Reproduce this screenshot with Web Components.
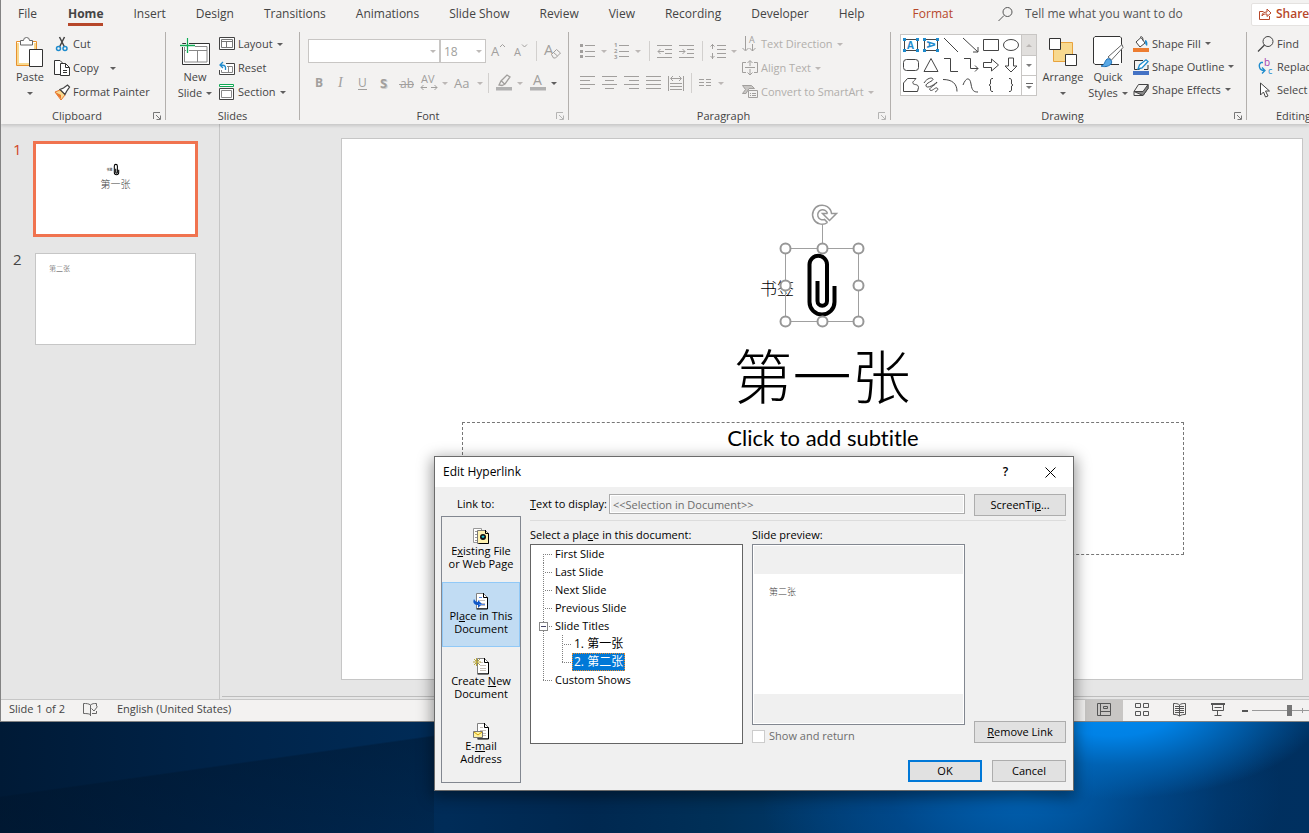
<!DOCTYPE html>
<html lang="en">
<head>
<meta charset="utf-8">
<title>Presentation editor</title>
<style>
html,body{height:100%}
body{margin:0;overflow:hidden;font:11px/16px "Open Sans","Noto Sans CJK SC",sans-serif;color:#444;
 background:
 radial-gradient(ellipse 210px 90px at 85% calc(100% - 124px),#0088ee 0,#0082e6 30%,#0068bccc 62%,#00458800 100%),
 radial-gradient(ellipse 260px 150px at 78% calc(100% - 40px),#0060b0 0,#00509a88 50%,#00305800 100%),
 linear-gradient(172deg,#00142a00 43%,#00142a66 44%,#00142a33 100%) left bottom/434px 111px no-repeat,
 linear-gradient(90deg,#001a36 0,#00244a 18%,#002c58 34%,#002850 45%,#003058 55%,#00407a 70%,#004888 78%,#003a70 86%,#002f5e 93%,#003060 100%);}
</style>
</head>
<body>
<desktop-scene></desktop-scene>
<script>
const define = (tag, html, setup) => {
  const tpl = document.createElement('template');
  customElements.define(tag, class extends HTMLElement {
    constructor() { super(); this.attachShadow({mode: 'open'}); }
    connectedCallback() {
      if (this.shadowRoot.childNodes.length) return;
      tpl.innerHTML = typeof html === 'function' ? html(this) : html;
      this.shadowRoot.append(tpl.content.cloneNode(true));
      if (setup) setup(this, this.shadowRoot);
    }
  });
};

const G = '#a19f9d', K = '#444', B = '#1e8bcd';
const lines = (list, c = G) => `<path d="${list.map(([x, y, w]) => `M${x} ${y}.5h${w}`).join('')}" stroke="${c}" fill="none"/>`;
const doc = (x, y) => `<path d="M${x + .5} ${y + .5}h7l4 4v11h-11z" fill="#fff" stroke="#808080"/><path d="M${x + 7.5} ${y}v4.500h4v11.500h-11" fill="none" stroke="#000"/><path d="M${x + 3} ${y + 4.500}h3M${x + 3} ${y + 7.500}h6M${x + 3} ${y + 10.500}h6M${x + 3} ${y + 12.500}h6" stroke="#c8c0b8"/>`;
const icons = {
  paste: [28, 31, `<path d="M.5 4.500h20v24H.5z" fill="#fff" stroke="#e8912d"/><path d="M2 6v21h17V6" fill="none" stroke="#f8d98f" stroke-width="2"/><path d="M4.500 8V3.500h3a3 3 0 0 1 6 0h3V8z" fill="#fff" stroke="#666"/><path d="M13.500 12.500h13v17h-13z" fill="#fff" stroke="#333"/>`],
  cut: [16, 16, `<path d="M5.500 1l5 10M10.500 1l-5 10" stroke="#444" stroke-width="1.500"/><circle cx="4.500" cy="12.500" r="2" fill="none" stroke="${B}" stroke-width="1.500"/><circle cx="11" cy="12.500" r="2" fill="none" stroke="${B}" stroke-width="1.500"/>`],
  copy: [16, 16, `<path d="M6 14.500H.500V.500H6l2.500 2.500" fill="#fff" stroke="#333"/><path d="M6.500 3.500h5l4 4v8h-9z" fill="#fff" stroke="#333"/><path d="M11.500 3.500v4h4M9 10.500h4M9 12.500h4" fill="none" stroke="#333"/>`],
  painter: [16, 16, `<path d="M1 8l5-2 5 5-4 5z" fill="#f8d98f" stroke="#e8752d"/><path d="M1 8l6 3 0 4z" fill="#e8752d"/><path d="M6 5.500l5 5 1.500-3L15.500 3 13.500 1 9.500 4z" fill="#fff" stroke="#444" stroke-width="1.300"/>`],
  newslide: [30, 28, `<path d="M2.500 5.500h27v21h-27z" fill="#fff" stroke="#333"/><path d="M4.500 8.500h22.500v15.500h-22.500zM4.500 12.500h22.500M17.500 12.500v11.500" fill="none" stroke="#888"/><path d="M7.500 0v15M0 7.500h15" stroke="#fff" stroke-width="3"/><path d="M7.500 0v15M0 7.500h15" stroke="#10a854" stroke-width="1.300"/>`],
  layout: [16, 14, `<path d="M.5.5h15v12H.500z" fill="#fff" stroke="#444"/><path d="M2.500 2.500h11v8h-11zM2.500 4.500h11M7.500 4.500v6" fill="none" stroke="#777"/>`],
  reset: [16, 15, `<path d="M7 2.500h8.500v11H.500V9" fill="#fff" stroke="#444"/><path d="M8 5.500h5.500v6h-11V9M9.500 5v6" fill="none" stroke="#888"/><path d="M6.500 9V6.500c0-2-2-2.500-5-2.500M4 1L1 4l3 3" fill="none" stroke="${B}" stroke-width="1.300"/>`],
  section: [16, 16, `<path d="M.5.5h14v2H.500z" fill="#fff" stroke="#10a854"/><path d="M.5 4.500h14v11H.500z" fill="#fff" stroke="#444"/><path d="M2.500 6.500h10v7h-10z" fill="none" stroke="#888"/>`],
  grow: [16, 16, `<text x="1" y="13" font-size="13" fill="${G}">A</text><path d="M10 4l2.500-2.500L15 4" fill="none" stroke="${G}"/>`],
  shrink: [16, 16, `<text x="1" y="13" font-size="11" fill="${G}">A</text><path d="M9 1.500L11.500 4 14 1.500" fill="none" stroke="${G}"/>`],
  clear: [18, 18, `<text x="1" y="13" font-size="15" fill="${G}">A</text><path d="M8.500 12.500l5-5 4 3.500-5 5h-2z" fill="#f3f2f1" stroke="${G}"/><path d="M10.500 10.500l4 3.500" stroke="${G}"/>`],
  bold: [16, 16, `<text x="4" y="12" font-size="12" font-weight="700" fill="${G}">B</text>`],
  italic: [16, 16, `<text x="5" y="12" font-size="14" font-style="italic" font-family="Liberation Serif" fill="${G}">I</text>`],
  underline: [16, 16, `<text x="3" y="12" font-size="12" fill="${G}">U</text><path d="M3 14.500h9" stroke="${G}"/>`],
  shadow: [16, 16, `<text x="4" y="14" font-size="13" font-weight="700" fill="#d0cecc">S</text><text x="3" y="13" font-size="13" font-weight="700" fill="${G}">S</text>`],
  strike: [16, 16, `<text x="1" y="13" font-size="12" fill="${G}">ab</text><path d="M0 9.500h15" stroke="${G}"/>`],
  spacing: [16, 18, `<text x="0" y="9" font-size="11" fill="${G}">AV</text><path d="M0 13.500h6M10 13.500h6M2.500 11L0 13.500 2.500 16M13.500 11l2.500 2.500-2.500 2.500" fill="none" stroke="${G}"/>`],
  acase: [18, 16, `<text x="0" y="13" font-size="13" fill="${G}">Aa</text>`],
  highlight: [16, 18, `<path d="M0 13h16v3.500H0z" fill="#b1b1b1"/><path d="M3 11l2-4 6-6 3 2-5 7-3 1.500zM5.500 7l3 3" fill="none" stroke="${G}" stroke-width="1.300"/>`],
  fontcolor: [16, 18, `<path d="M0 13h16v3.500H0z" fill="#b1b1b1"/><text x="3" y="11" font-size="14" fill="${G}">A</text>`],
  bullets: [16, 16, lines([[5, 2, 10], [5, 8, 10], [5, 13, 10]]) + `<path d="M0 1h3v3H0zM0 7h3v3H0zM0 12h3v3H0z" fill="${G}"/>`],
  numbers: [16, 18, lines([[5, 3, 10], [5, 9, 10], [5, 14, 10]]) + `<g font-size="6" font-weight="700" fill="${G}"><text x="0" y="5">1</text><text x="0" y="11">2</text><text x="0" y="17">3</text></g>`],
  outdent: [16, 16, lines([[0, 2, 15], [8, 6, 7], [8, 10, 7], [0, 14, 15]]) + `<path d="M1 8.500h6M3.500 6L1 8.500 3.500 11" fill="none" stroke="${G}"/>`],
  indent: [16, 16, lines([[0, 2, 15], [8, 6, 7], [8, 10, 7], [0, 14, 15]]) + `<path d="M0 8.500h6M3.500 6L6 8.500 3.500 11" fill="none" stroke="${G}"/>`],
  lineh: [16, 16, lines([[7, 2, 9], [7, 6, 9], [7, 10, 9], [7, 14, 9]]) + `<path d="M2.500 1v5M2.500 10v6M.5 3.500l2-2 2 2M.5 13l2 2 2-2" fill="none" stroke="${G}"/>`],
  left: [16, 16, lines([[0, 1, 15], [0, 5, 10], [0, 9, 15], [0, 13, 10]])],
  center: [16, 16, lines([[0, 1, 15], [3, 5, 9], [0, 9, 15], [3, 13, 9]])],
  right: [16, 16, lines([[0, 1, 15], [5, 5, 10], [0, 9, 15], [5, 13, 10]])],
  justify: [16, 16, lines([[0, 1, 15], [0, 5, 15], [0, 9, 15], [0, 13, 15]])],
  distribute: [16, 16, lines([[2, 8, 12], [2, 11, 12], [2, 14, 12]]) + `<path d="M.5 1v15M15.500 1v15M3 3.500h10M5 1L2.500 3.500 5 6M11 1l2.500 2.500L11 6" fill="none" stroke="${G}"/>`],
  columns: [14, 12, lines([[0, 2, 5], [7, 2, 5], [0, 5, 5], [7, 5, 5], [0, 8, 5], [7, 8, 5]])],
  direction: [16, 18, `<path d="M3.500 1v14M.5 13l3 3 3-3M10.500 9v7M7.500 13l3 3 3-3" fill="none" stroke="${G}"/><text x="7" y="8" font-size="9" fill="${G}">A</text>`],
  aligntext: [16, 16, `<path d="M4 2.500H.500v10H4M12 2.500h3.500v10H12M8 1v5M8 9v6M5.500 3L8 .500 10.500 3M5.500 12.500L8 15l2.500-2.500M3 7.500h10" fill="none" stroke="${G}"/>`],
  smartart: [16, 16, `<path d="M.5 1.500h9l3 3H7l-3 5H.500l3-4z" fill="#c8c6c4" stroke="${G}"/><path d="M6.500 6.500h9v7h-9z" fill="#f3f2f1" stroke="${G}"/><path d="M8 9.500h1M10 9.500h4M8 11.500h1M10 11.500h4" stroke="${G}"/>`],
  arrange: [28, 28, `<path d="M4.500 4.500h19v19h-19z" fill="#f8d98f" stroke="#e8a33d"/><path d="M.5.500h11v11H.500zM16.500 16.500h11v11h-11z" fill="#fff" stroke="#333"/>`],
  styles: [31, 32, `<path d="M26 28.500H2L.500 27V2L2 .500h25L28.500 2v25" fill="#fff" stroke="#333"/><path d="M15 21L29 8.500l1 3L18.500 24z" fill="#fff" stroke="#666"/><path d="M8 30c4-1 3-4 6-7 3-1 6 2 4 5-3 3-7 3-10 2z" fill="#5aa9e6" stroke="#1b6eb5"/>`],
  fill: [16, 16, `<path d="M0 12h16v4H0z" fill="#ed7d31"/><path d="M3 6l5-4.500 4 5.500-5 4zM7 1.500c2-2 3 0 3 3" fill="#fff" stroke="#444"/><path d="M12 4c2 0 3 3 2 6-2-1-2-3-2-6z" fill="${B}"/>`],
  outline: [16, 16, `<path d="M0 12h16v4H0z" fill="#4472c4"/><path d="M10 1.500H1.500v9h5M15 6v4.500h-4" fill="none" stroke="#333"/><path d="M5 10l1.500-4L13 .800 15 2.500 9 9z" fill="#fff" stroke="${B}" stroke-width="1.300"/>`],
  effects: [16, 14, `<path d="M1 8.500L5.500 1.500h9.500v4l-5 7H1z" fill="#f3f2f1" stroke="#444"/><path d="M1 8.500h9l5-7v4l-5 7z" fill="#888" stroke="#444"/>`],
  find: [16, 16, `<circle cx="10" cy="5.500" r="5" fill="none" stroke="#444"/><path d="M6.500 9L0 15.500" stroke="#444" stroke-width="1.300"/>`],
  replace: [16, 17, `<text x="6" y="8" font-size="10" fill="#a33fb0">b</text><text x="10" y="16" font-size="9" fill="${B}">c</text><path d="M5 4.500H3c-3 2-2 8 3 8M4 9.500l3 3-3 3" fill="none" stroke="${B}" stroke-width="1.300"/>`],
  select: [16, 16, `<path d="M2.500 1v12l3-3 2 5 2.500-1-2.500-5h4z" fill="#fff" stroke="#444"/>`],
  search: [16, 16, `<circle cx="9.500" cy="6" r="4.500" fill="none" stroke="#555"/><path d="M6 9.500L.500 15" stroke="#555"/>`],
  share: [12, 12, `<path d="M4.500 3.500H.500v8h10V8" fill="none" stroke="#b7472a"/><path d="M3 8c0-3 2-4 5-4V1l4 4-4 3.500V6C6 6 4 6 3 8z" fill="none" stroke="#b7472a"/>`],
  launcher: [8, 8, `<path d="M.5 7V.500H7M3 3l4 4M7.500 3.500v4h-4" fill="none" stroke="#777"/>`],
  spell: [16, 14, `<path d="M7.500 12.500c-2-1-5-1-7-1v-10c3 0 5 0 7 1.500v11zM7.500 3c2-1.500 3-1.500 6-1.500v3M13.500 9v2.500H9M8.500 6.500l2.500 2.500 3.500-4.500" fill="none" stroke="#666"/>`],
  normal: [14, 14, `<path d="M.5.500h13v12H.500zM3.500.500v12M3.500 8.500h10M6.500 3.500h4v2h-4z" fill="none" stroke="#555"/>`],
  sorter: [14, 14, `<path d="M.5.500h5v4h-5zM8.500.500h5v4h-5zM.5 8.500h5v4h-5zM8.500 8.500h5v4h-5z" fill="none" stroke="#555"/>`],
  reading: [14, 14, `<path d="M6.500 13V2C5 .500 3 .500.500.500v11c2 0 4 0 6 1.500 2-1.500 4-1.500 6-1.500V.500c-2.500 0-4.500 0-6 1.500M2 3.500h9M2 5.500h9M2 7.500h9M2 9.500h9" fill="none" stroke="#555"/>`],
  show: [14, 14, `<path d="M0 1h14" stroke="#555" stroke-width="2"/><path d="M1.500 2v5.500h11V2M3.500 4.500h7M6.500 7v5M3.500 12.500h7" fill="none" stroke="#555"/>`],
  file: [16, 16, `<path d="M.5.500h8v14h-8z" fill="#fff" stroke="#999"/><path d="M2 3.500h3M2 6.500h3M2 9.500h3M2 12.500h3" stroke="#999"/><path d="M4.500 2.500h8l3 3v10h-11z" fill="#fff2b0" stroke="#777"/><path d="M12.500 2v3.500h3v10h-10" fill="none" stroke="#000"/><circle cx="10" cy="9" r="3" fill="#111"/><path d="M8.500 9a1.500 1.500 0 0 1 3 0l-1.500 1z" fill="#20c8d8"/>`],
  place: [16, 16, doc(3, 0) + `<path d="M1 6c-2 4 1 6 4 6v3l4-4-4-4v2c-2 0-3-1-4-3z" fill="#1058c8"/><path d="M6 4.500h3M6 11.500h6" stroke="#5588e8"/>`],
  create: [16, 16, doc(4, 0) + `<path d="M3.500 0v8M0 4h8M1 1l6 6M7 1L1 7" stroke="#b8a840"/>`],
  mail: [16, 16, doc(4, 0) + `<path d="M.5 8.500h9v6h-9z" fill="#fff2a0" stroke="#777"/><path d="M1 9l4 3 4-3" fill="none" stroke="#d0a000"/>`],
  // shape gallery
  textbox: [18, 16, `<path d="M2.500 2.500h13v11h-13z" fill="#fff" stroke="#444"/><path d="M1 1h3v3H1zM14 1h3v3h-3zM1 12h3v3H1zM14 12h3v3h-3z" fill="${B}"/><text x="5" y="12" font-size="10" font-weight="700" fill="${B}">A</text>`],
  vtextbox: [18, 16, `<path d="M2.500 2.500h13v11h-13z" fill="#fff" stroke="#444"/><path d="M1 1h3v3H1zM14 1h3v3h-3zM1 12h3v3H1zM14 12h3v3h-3z" fill="${B}"/><text x="5" y="12" font-size="10" font-weight="700" fill="${B}" transform="rotate(90 9 8)">A</text>`],
  line: [18, 16, `<path d="M2 1l14 14" stroke="${K}"/>`],
  arrow: [18, 16, `<path d="M1 1l15 14M16 10v5h-5" fill="none" stroke="${K}"/>`],
  rect: [18, 16, `<path d="M1.500 2.500h15v11h-15z" fill="none" stroke="${K}"/>`],
  oval: [18, 16, `<ellipse cx="9" cy="8" rx="7.500" ry="5.500" fill="none" stroke="${K}"/>`],
  rrect: [18, 16, `<rect x="1.500" y="2.500" width="15" height="11" rx="3" fill="none" stroke="${K}"/>`],
  tri: [18, 16, `<path d="M9 1.500l7 13H2z" fill="none" stroke="${K}"/>`],
  elbow: [18, 16, `<path d="M2 1.500h6.500v13H16" fill="none" stroke="${K}"/>`],
  elbowarrow: [18, 16, `<path d="M2 1.500h6.500v10H16M13 8.500l3 3-3 3" fill="none" stroke="${K}"/>`],
  rarrow: [18, 16, `<path d="M1.500 5.500h8v-3.500l7 6-7 6v-3.500h-8z" fill="none" stroke="${K}"/>`],
  darrow: [18, 16, `<path d="M6.500 1v8H3l6 6 6-6h-3.500V1z" fill="none" stroke="${K}"/>`],
  freeform: [18, 16, `<path d="M1.500 14.500V6l4-4.500h8.500c-1 2-4 3-3 5 2 2 5 0 5.500 4l-1 4z" fill="none" stroke="${K}"/>`],
  scribble: [18, 16, `<path d="M2 6c3-5 8-6 9-4s-8 4-7 7 8-1 11-4c-1 3-9 6-7 8s5-3 7-2 0 3-2 4" fill="none" stroke="${K}"/>`],
  arc: [18, 16, `<path d="M1 2.500c9 0 14 4 14 12" fill="none" stroke="${K}"/>`],
  curve: [18, 16, `<path d="M1 8C4 0 8 0 9 7s3 8 7 8" fill="none" stroke="${K}"/>`],
  lbrace: [18, 16, `<path d="M11 1.500H9.500L8.500 3v4L7 8l1.500 1v4l1 1.500H11" fill="none" stroke="${K}"/>`],
  rbrace: [18, 16, `<path d="M7 1.500h1.500l1 1.500v4L11 8 9.500 9v4l-1 1.500H7" fill="none" stroke="${K}"/>`],
};

define('ui-icon', el => {
  const [w, h, body] = icons[el.getAttribute('name')];
  return `<style>:host{display:block;flex:none}svg{display:block;overflow:visible;font-family:"Open Sans",sans-serif}</style>
  <svg width="${w}" height="${h}" viewBox="0 0 ${w} ${h}" aria-hidden="true">${body}</svg>`;
});

define('drop-caret', `<style>:host{display:inline-block;flex:none;width:0;height:0;border:3px solid transparent;border-top-color:currentColor;border-bottom:0;opacity:.85}</style>`);

define('ribbon-command', el => `<style>
:host{display:block;flex:none}
:host([off]){color:#b1aeab}
button{all:unset;display:flex;align-items:center;gap:3px;height:var(--row,24px);padding:0 2px;white-space:nowrap}
.ic{width:16px;display:flex;justify-content:center}
drop-caret{margin-left:1px}
:host([far]) drop-caret{margin-left:8px}
</style><button><span class="ic"><ui-icon name="${el.getAttribute('icon')}"></ui-icon></span><slot></slot>${el.hasAttribute('caret') ? '<drop-caret></drop-caret>' : ''}</button>`);

define('ribbon-large', el => `<style>
:host{display:block;flex:none;width:44px}
button{all:unset;display:flex;flex-direction:column;align-items:center;width:100%;padding-top:3px;white-space:nowrap}
.ic{height:34px;display:flex;align-items:center}
.two{height:16px;display:flex;align-items:center;gap:4px}
</style><button><span class="ic"><ui-icon name="${el.getAttribute('icon')}"></ui-icon></span><span><slot></slot></span><span class="two"><slot name="second"></slot><drop-caret></drop-caret></span></button>`);

define('tool-button', el => `<style>
:host{display:block;flex:none;width:22px;color:#b1aeab}
:host([caret]){width:34px}
:host([caret][tight]){width:33px}
:host([dark]){color:#444}
button{all:unset;display:flex;align-items:center;justify-content:center;height:24px;width:100%}
:host([caret]) button{justify-content:flex-start;gap:5px;padding-left:3px;box-sizing:border-box}
</style><button aria-label="${el.getAttribute('icon')}"><ui-icon name="${el.getAttribute('icon')}"></ui-icon>${el.hasAttribute('caret') ? '<drop-caret></drop-caret>' : ''}</button>`);

define('tool-sep', `<style>:host{display:block;flex:none;width:1px;height:20px;margin:0 4px;background:#d2d0ce}</style>`);

define('ribbon-group', el => `<style>
:host{display:flex;flex-direction:column;flex:none;box-sizing:border-box;height:88px;border-right:1px solid #b3b0ad}
.content{flex:none;height:74px;display:flex;padding-left:var(--pad,7px)}
.foot{flex:none;display:flex;align-items:center;height:20px;margin-bottom:-6px}
.foot span{flex:1;text-align:center}
.foot ui-icon{margin-right:4px}
:host([off]) .foot ui-icon{opacity:.5}
</style><div class="content"><slot></slot></div><div class="foot"><span>${el.getAttribute('label')}</span>${el.hasAttribute('launcher') ? '<ui-icon name="launcher"></ui-icon>' : ''}</div>`);

define('ribbon-tabs', `<style>
:host{display:flex;align-items:center;height:28px;font-size:12px;overflow:hidden}
nav{display:flex;gap:30px;padding-left:17px;flex:none}
a{color:#444;text-decoration:none;line-height:17px;padding-bottom:1px;margin-top:3px;border-bottom:3px solid transparent;white-space:nowrap}
a.on{font-weight:700;border-color:#b7472a;margin-left:1px}
a.ctx{color:#b7472a;margin-left:18px}
.tell{display:flex;align-items:center;gap:11px;margin-left:45px;flex:none}
.tell input{all:unset;width:180px}
.tell input::placeholder{color:#555;opacity:1}
.share{margin-left:auto;flex:none;width:58px;overflow:hidden}
.share button{all:unset;display:flex;align-items:center;gap:5px;width:74px;height:23px;padding-left:7px;background:#fff;border:1px solid #e4e2e0;border-radius:2px;color:#b7472a;font-weight:600;box-sizing:border-box}
</style>
<nav><a href="#file">File</a><a class="on" href="#home">Home</a><a href="#insert">Insert</a><a href="#design">Design</a><a href="#transitions">Transitions</a><a href="#animations">Animations</a><a href="#show">Slide Show</a><a href="#review">Review</a><a href="#view">View</a><a href="#rec">Recording</a><a href="#dev">Developer</a><a href="#help">Help</a><a class="ctx" href="#format">Format</a></nav>
<label class="tell"><ui-icon name="search"></ui-icon><input placeholder="Tell me what you want to do" aria-label="Tell me what you want to do"></label>
<div class="share"><button><ui-icon name="share"></ui-icon>Share</button></div>`);

define('shape-gallery', `<style>
:host{display:flex;flex:none;box-sizing:border-box;width:137px;height:62px;margin:2px 4px 0 0;border:1px solid #c8c6c4;background:#fff}
.grid{display:grid;grid-template-columns:repeat(6,20px);grid-template-rows:repeat(3,20px);place-items:center;flex:1}
.bar{display:grid;grid-template-rows:repeat(3,20px);width:14px;border-left:1px solid #c8c6c4}
.bar button{all:unset;display:flex;flex-direction:column;gap:2px;align-items:center;justify-content:center;color:#666}
.bar button+button{border-top:1px solid #c8c6c4}
.bar .up{background:#e1dfdd;color:#b1aeab}
.up drop-caret{transform:rotate(180deg)}
.more i{width:7px;height:1px;background:#666}
</style><div class="grid">${['textbox', 'vtextbox', 'line', 'arrow', 'rect', 'oval', 'rrect', 'tri', 'elbow', 'elbowarrow', 'rarrow', 'darrow', 'freeform', 'scribble', 'arc', 'curve', 'lbrace', 'rbrace'].map(n => `<ui-icon name="${n}"></ui-icon>`).join('')}</div>
<div class="bar"><button class="up" aria-label="Up"><drop-caret></drop-caret></button><button aria-label="Down"><drop-caret></drop-caret></button><button class="more" aria-label="More"><i></i><drop-caret></drop-caret></button></div>`);

define('combo-box', el => `<style>
:host{display:block;position:relative;flex:none;box-sizing:border-box;height:24px;color:#b1aeab}
select{appearance:none;width:100%;height:100%;border:1px solid #c8c6c4;border-radius:0;background:#fff;color:#a19f9d;font:12px "Open Sans",sans-serif;padding:0 3px;opacity:1}
drop-caret{position:absolute;right:4px;top:11px}
</style><select disabled aria-label="${el.getAttribute('label')}"><option>${el.getAttribute('value')}</option></select><drop-caret></drop-caret>`);

define('office-ribbon', `<style>
:host{display:block;flex:none;background:#f3f2f1;box-shadow:0 2px 3px #0002;position:relative;padding-bottom:4px}
.groups{display:flex;overflow:hidden;padding:4px 0 6px;margin-bottom:-6px}
.col{display:flex;flex-direction:column}
.rows{padding-top:3px}
.row{display:flex;align-items:center;height:32px}
</style>
<ribbon-tabs></ribbon-tabs>
<div class="groups">
<ribbon-group label="Clipboard" launcher style="width:165px">
 <ribbon-large icon="paste">Paste</ribbon-large>
 <div class="col"><ribbon-command icon="cut">Cut</ribbon-command><ribbon-command icon="copy" caret far>Copy</ribbon-command><ribbon-command icon="painter">Format Painter</ribbon-command></div>
</ribbon-group>
<ribbon-group label="Slides" style="width:134px">
 <ribbon-large icon="newslide">New<span slot="second">Slide</span></ribbon-large>
 <div class="col"><ribbon-command icon="layout" caret>Layout</ribbon-command><ribbon-command icon="reset">Reset</ribbon-command><ribbon-command icon="section" caret>Section</ribbon-command></div>
</ribbon-group>
<ribbon-group label="Font" launcher off style="width:269px;--pad:8px">
 <div class="rows">
  <div class="row"><combo-box label="Font" value="" style="width:132px"></combo-box><combo-box label="Font size" value="18" style="width:46px"></combo-box><tool-button icon="grow" style="width:24px"></tool-button><tool-button icon="shrink"></tool-button><tool-sep></tool-sep><tool-button icon="clear"></tool-button></div>
  <div class="row"><tool-button icon="bold"></tool-button><tool-button icon="italic"></tool-button><tool-button icon="underline"></tool-button><tool-button icon="shadow"></tool-button><tool-button icon="strike"></tool-button><tool-button icon="spacing" caret tight></tool-button><tool-button icon="acase" caret tight></tool-button><tool-sep></tool-sep><tool-button icon="highlight" caret></tool-button><tool-button icon="fontcolor" caret dark></tool-button></div>
 </div>
</ribbon-group>
<ribbon-group label="Paragraph" launcher off style="width:322px;--pad:8px">
 <div class="rows">
  <div class="row"><tool-button icon="bullets" caret></tool-button><tool-button icon="numbers" caret></tool-button><tool-sep></tool-sep><tool-button icon="outdent"></tool-button><tool-button icon="indent"></tool-button><tool-sep></tool-sep><tool-button icon="lineh" caret tight></tool-button></div>
  <div class="row"><tool-button icon="left"></tool-button><tool-button icon="center"></tool-button><tool-button icon="right"></tool-button><tool-button icon="justify"></tool-button><tool-button icon="distribute"></tool-button><tool-sep></tool-sep><tool-button icon="columns" caret></tool-button></div>
 </div>
 <div class="col"><ribbon-command off icon="direction" caret>Text Direction</ribbon-command><ribbon-command off icon="aligntext" caret>Align Text</ribbon-command><ribbon-command off icon="smartart" caret>Convert to SmartArt</ribbon-command></div>
</ribbon-group>
<ribbon-group label="Drawing" launcher style="width:356px;--pad:9px;--row:23px">
 <shape-gallery></shape-gallery>
 <ribbon-large icon="arrange">Arrange</ribbon-large><ribbon-large icon="styles" style="width:46px">Quick<span slot="second">Styles</span></ribbon-large>
 <div class="col"><ribbon-command icon="fill" caret>Shape Fill</ribbon-command><ribbon-command icon="outline" caret>Shape Outline</ribbon-command><ribbon-command icon="effects" caret>Shape Effects</ribbon-command></div>
</ribbon-group>
<ribbon-group label="Editing" style="width:94px;--pad:9px;--row:23px">
 <div class="col"><ribbon-command icon="find">Find</ribbon-command><ribbon-command icon="replace" caret>Replace</ribbon-command><ribbon-command icon="select" caret>Select</ribbon-command></div>
</ribbon-group>
</div>`);

const clip = '<path d="M49.500 38v16a12.500 12.500 0 0 1-25 0V16.500a8.750 8.750 0 0 1 17.500 0V53a4.750 4.750 0 0 1-9.500 0V33" fill="none" stroke="#000" stroke-width="4"/>';

define('slide-thumb', el => `<style>
:host{display:grid;grid-template-columns:22px 161px}
b{font:15px/12px "Open Sans",sans-serif;color:#444}
.face{box-sizing:border-box;height:92px;border:1px solid #c6c6c6;background:#fff;font-family:"Noto Sans CJK SC",sans-serif;font-weight:300;color:#444}
:host([selected]) b{color:#d24726}
:host([selected]) .face{border-color:#f0734f;box-shadow:0 0 0 2px #f0734f}
</style><b>${el.getAttribute('number')}</b><div class="face"><slot></slot></div>`);

define('slide-list', `<style>
:host{display:flex;flex-direction:column;gap:18px;flex:none;box-sizing:border-box;width:219px;padding:19px 0 0 12px;border-right:1px solid #c6c6c6}
.one{display:flex;flex-direction:column;align-items:center;padding-top:18px;font-size:10px;line-height:14px}
.mark{display:flex;align-items:center;font-size:3px;height:15px;font-weight:700;margin-right:5px}
.two{padding:9px 13px;font-size:7px;line-height:10px}
</style>
<slide-thumb number="1" selected><div class="one"><span class="mark"><span>书签</span><svg width="7" height="13" viewBox="17 0 40 74" aria-hidden="true">${clip.replace('"4"', '"6"')}</svg></span><span>第一张</span></div></slide-thumb>
<slide-thumb number="2"><div class="two">第二张</div></slide-thumb>`);

define('slide-canvas', `<style>
:host{display:block;position:relative;box-sizing:border-box;aspect-ratio:962/542;background:#fff;border:1px solid #c6c6c6;color:#000;font-family:"Noto Sans CJK SC",sans-serif;font-weight:300}
.mark{position:absolute;left:418px;top:137px;font-size:17px;line-height:24px}
.clip{position:absolute;left:437px;top:60px}
h1{position:absolute;left:0;right:0;top:193px;margin:0;text-align:center;font-size:59px;line-height:84px;font-weight:300}
.sub{position:absolute;left:120px;right:118px;top:283px;height:133px;box-sizing:border-box;border:1px dashed #777;text-align:center;font:22px/30px Lato,sans-serif;font-variant-ligatures:none}
</style>
<span class="mark">书签</span>
<svg class="clip" width="86" height="134" viewBox="0 0 86 134" aria-hidden="true">
<g transform="translate(6 49)">${clip}</g>
<g fill="none" stroke="#a0a0a0"><path d="M6.500 49.500h73v73h-73zM43.500 26v23"/>
<g fill="#fff" stroke="#979797" stroke-width="2"><circle cx="6.500" cy="49.500" r="5"/><circle cx="43.500" cy="49.500" r="5"/><circle cx="79.500" cy="49.500" r="5"/><circle cx="6.500" cy="86.500" r="5"/><circle cx="79.500" cy="86.500" r="5"/><circle cx="6.500" cy="122.500" r="5"/><circle cx="43.500" cy="122.500" r="5"/><circle cx="79.500" cy="122.500" r="5"/></g>
<g stroke="#979797" stroke-width="1.500"><path d="M48.500 23.500A9.500 9.500 0 1 1 52.500 14.500H57.500L50.500 21.500L43.500 14.500H48.500"/><path d="M48.500 14.500A5 5 0 1 0 45.500 20.500L48.500 23.500"/></g></g>
</svg>
<h1>第一张</h1>
<div class="sub">Click to add subtitle</div>`);

define('status-bar', `<style>
:host{display:flex;align-items:center;flex:none;height:21px;background:#f3f2f1;border-top:1px solid #c6c6c6;padding-left:8px;overflow:hidden}
.mid{display:flex;align-items:center;flex:1;gap:18px;padding-bottom:3px}
.right{display:flex;align-items:center;flex:none;width:224px;overflow:hidden}
.right button{all:unset;flex:none;width:38px;height:21px;display:flex;align-items:center;justify-content:center}
.right ui-icon{margin-bottom:1px}
.right .on{background:#c8c6c4}
.right .minus{width:14px;margin-left:1px;height:21px}
.minus i{width:6px;height:2px;background:#555}
input{appearance:none;flex:none;width:100px;height:12px;margin:0;background:linear-gradient(#999,#999) center/100% 1px no-repeat,linear-gradient(#999,#999) center/1px 5px no-repeat}
input::-webkit-slider-thumb{appearance:none;width:5px;height:11px;background:#777}
</style>
<div class="mid"><span>Slide 1 of 2</span><ui-icon name="spell"></ui-icon><span>English (United States)</span></div>
<div class="right"><button class="on" aria-label="Normal"><ui-icon name="normal"></ui-icon></button><button aria-label="Slide sorter"><ui-icon name="sorter"></ui-icon></button><button aria-label="Reading view"><ui-icon name="reading"></ui-icon></button><button aria-label="Slide show"><ui-icon name="show"></ui-icon></button><button class="minus" aria-label="Zoom out"><i></i></button><input type="range" value="37" aria-label="Zoom"></div>`);

define('app-window', `<style>
:host{display:flex;flex-direction:column;box-sizing:border-box;height:100%;overflow:hidden;background:#e6e6e6;border:solid #838383;border-width:0 0 1px 1px}
.work{display:flex;flex:1;min-height:0}
.stage{flex:1;min-width:0;margin:0 0 2px 2px;padding:14px 6px 0 119px;border-bottom:1px solid #bdbdbd}
</style>
<office-ribbon></office-ribbon>
<div class="work"><slide-list></slide-list><main class="stage"><slide-canvas></slide-canvas></main></div>
<status-bar></status-bar>`);

define('push-button', el => `<style>
:host{display:block}
button{box-sizing:border-box;display:block;width:100%;height:22px;padding:0;border:1px solid #adadad;border-radius:0;background:#e1e1e1;color:#000;font:inherit}
:host([primary]) button{border:2px solid #0078d7}
</style><button><slot></slot></button>`);

define('link-target', el => `<style>
:host{display:block}
button{all:unset;box-sizing:border-box;display:flex;flex-direction:column;align-items:center;width:100%;height:65px;padding-top:10px;text-align:center;line-height:13px;border:1px solid transparent;color:#000}
:host([selected]) button{background:#c1dcf3;border-color:#91c9f7}
</style><button><ui-icon name="${el.getAttribute('icon')}"></ui-icon><span><slot></slot></span></button>`);

define('place-tree', `<style>
:host{display:block;box-sizing:border-box;height:200px;background:#fff;border:1px solid #646464;color:#000}
ul{list-style:none;margin:0;padding:0}
li.r{height:18px;line-height:17px;white-space:nowrap}
.r{--v:repeating-linear-gradient(#808080 0 1px,#fff 1px 2px);--h:repeating-linear-gradient(90deg,#808080 0 1px,#fff 1px 2px);padding-left:24px;position:relative;
 background:var(--v) 12px 0/1px 100% no-repeat,var(--h) 12px 9px/9px 1px no-repeat}
.first{background:var(--v) 12px 100%/1px 9px no-repeat,var(--h) 12px 9px/9px 1px no-repeat}
.last{background:var(--v) 12px 0/1px 9px no-repeat,var(--h) 12px 9px/9px 1px no-repeat}
.k{padding-left:41px;background:var(--v) 12px 0/1px 100% no-repeat,var(--v) 31px 0/1px 100% no-repeat,var(--h) 31px 9px/10px 1px no-repeat}
.k.end{background:var(--v) 12px 0/1px 100% no-repeat,var(--v) 31px 0/1px 9px no-repeat,var(--h) 31px 9px/10px 1px no-repeat}
.k span{display:inline-block;height:16px;line-height:16px;border:1px solid transparent;padding:0 1px;font-size:12px}
.k .sel{background:#0078d7;color:#fff;border:1px dotted #f08c28}
button{all:unset;position:absolute;left:8px;top:5px;box-sizing:border-box;width:9px;height:9px;border:1px solid #888;background:linear-gradient(#446,#446) center/5px 1px no-repeat #fff}
</style>
<ul><li class="r first">First Slide</li><li class="r">Last Slide</li><li class="r">Next Slide</li><li class="r">Previous Slide</li><li class="r"><button aria-label="Collapse"></button>Slide Titles</li><li class="r k"><span>1. 第一张</span></li><li class="r k end"><span class="sel">2. 第二张</span></li><li class="r last">Custom Shows</li></ul>`);

define('hyperlink-dialog', `<style>
:host{display:block;box-sizing:border-box;width:640px;border:1px solid #6b6b6b;background:#f0f0f0;color:#000;box-shadow:0 4px 14px 2px #0006}
header{display:flex;align-items:center;height:30px;padding-left:8px;background:#fff;font-size:12px}
header span{flex:1}
header button{all:unset;width:45px;display:flex;justify-content:center;font-weight:600}
.body{display:flex;gap:9px;padding:0 7px 7px 6px}
aside{flex:none;width:80px}
aside p{margin:0;height:29px;line-height:34px;padding-left:16px}
.bar{box-sizing:border-box;height:267px;border:1px solid #828790}
.main{flex:1;padding-top:7px}
.top{display:grid;grid-template-columns:70px 1fr 92px;column-gap:9px;padding-bottom:4px;border-bottom:1px solid #dcdcdc;margin-bottom:5px}
.top label{line-height:20px;white-space:nowrap}
.top input{box-sizing:border-box;height:20px;width:100%;border:1px solid #ababab;padding:0 3px;background:#f0f0f0;box-shadow:inset 0 0 0 1px #fff;color:#6d6d6d;font:inherit}
.mid{display:grid;grid-template-columns:213px 213px 92px;column-gap:9px;grid-template-rows:18px 200px}
.mid>p{margin:0;line-height:18px}
.prev{box-sizing:border-box;height:181px;border:1px solid #828790;background:linear-gradient(#f0f0f0,#f0f0f0) 1px 1px/calc(100% - 2px) 28px no-repeat,linear-gradient(#f0f0f0,#f0f0f0) 1px calc(100% - 1px)/calc(100% - 2px) 29px no-repeat #fff;padding:39px 16px;font:9px/16px "Noto Sans CJK SC",sans-serif;font-weight:300;color:#444}
.chk{display:flex;align-items:center;gap:4px;color:#6d6d6d;margin-top:3px}
.chk input{appearance:none;box-sizing:border-box;width:13px;height:13px;margin:0;border:1px solid #ccc;background:#fff}
.rm{align-self:end;padding-bottom:1px}
.foot{display:flex;justify-content:flex-end;gap:10px;margin-top:16px}
.foot push-button{width:74px}
</style>
<header><span>Edit Hyperlink</span><button aria-label="Help">?</button><button aria-label="Close"><svg width="11" height="11" viewBox="0 0 11 11"><path d="M.5.500l10 10M10.500.500l-10 10" stroke="#000"/></svg></button></header>
<div class="body">
<aside><p>Link to:</p><div class="bar">
<link-target icon="file">E<u>x</u>isting File<br>or Web Page</link-target><link-target icon="place" selected>Pl<u>a</u>ce in This<br>Document</link-target><link-target icon="create">Create <u>N</u>ew<br>Document</link-target><link-target icon="mail">E-<u>m</u>ail<br>Address</link-target></div></aside>
<div class="main">
<div class="top"><label for="t"><u>T</u>ext to display:</label><input id="t" disabled value="&lt;&lt;Selection in Document&gt;&gt;"><push-button>ScreenTi<u>p</u>...</push-button></div>
<div class="mid"><p>Select a pla<u>c</u>e in this document:</p><p>Slide preview:</p><span></span>
<place-tree></place-tree>
<div><div class="prev">第二张</div><label class="chk"><input type="checkbox" disabled>Show and return</label></div>
<div class="rm"><push-button><u>R</u>emove Link</push-button></div></div>
<div class="foot"><push-button primary>OK</push-button><push-button>Cancel</push-button></div>
</div></div>`);

define('desktop-scene', `<style>
:host{display:block;position:relative;height:100%;overflow:hidden}
app-window{height:calc(100% - 111px)}
hyperlink-dialog{position:absolute;left:434px;top:456px}
</style><app-window></app-window><hyperlink-dialog></hyperlink-dialog>`);
</script>
</body>
</html>
